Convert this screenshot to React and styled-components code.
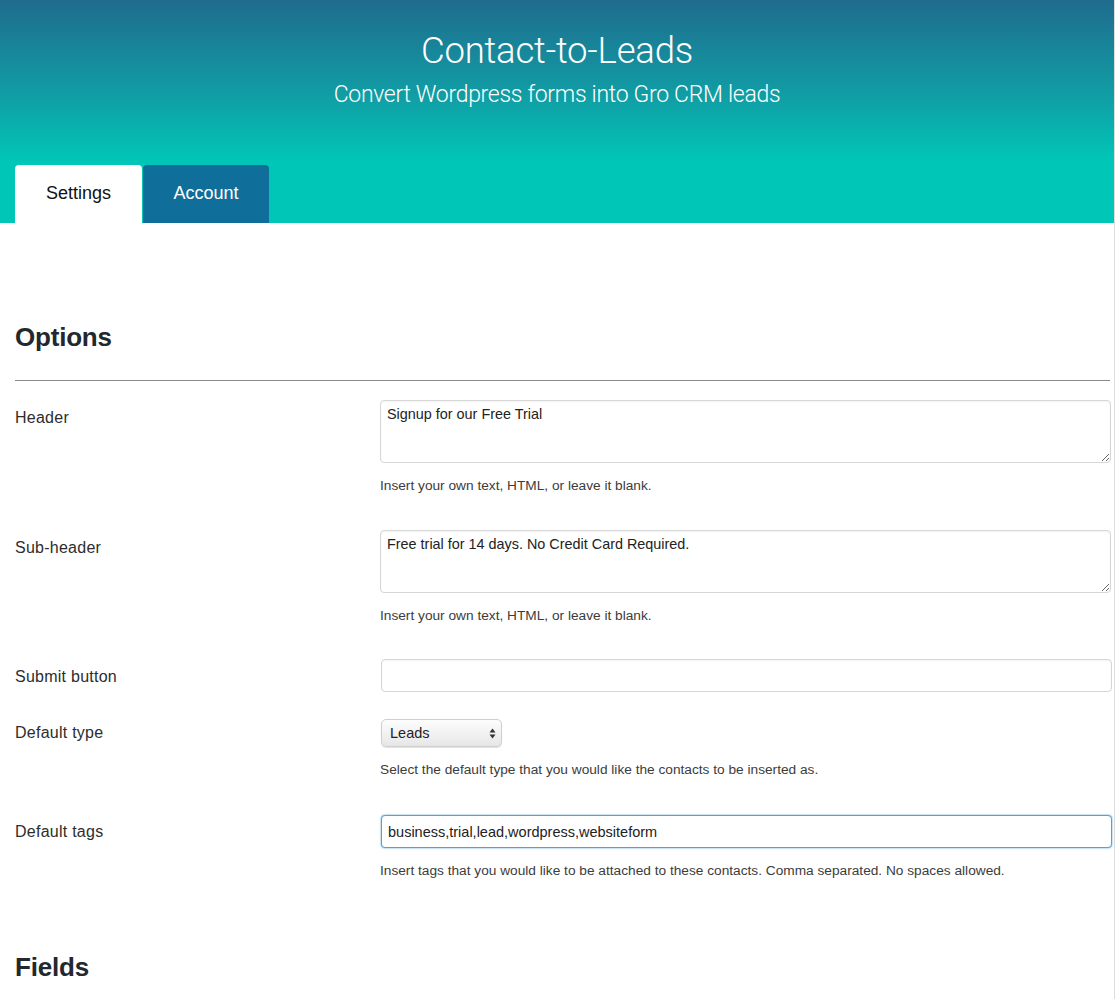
import React from "react";
import styled, { createGlobalStyle } from "styled-components";

const Global = createGlobalStyle`
  html, body { margin: 0; padding: 0; background: #fff; }
  body { font-family: "Liberation Sans", Arial, sans-serif; color: #333; }
  * { box-sizing: border-box; }
`;

const Page = styled.div`
  width: 1118px;
  min-height: 999px;
  display: flex;
`;

const Main = styled.div`
  width: 1115px;
  border-right: 1px solid #dcdcdc;
  min-height: 999px;
`;

const Hero = styled.header`
  height: 223px;
  background: linear-gradient(180deg, #1f6c8e 0%, #10a0a6 45%, #00c6b7 72%, #00c6b7 100%);
  display: flex;
  flex-direction: column;
  align-items: center;
  padding-top: 30px;
`;

const Title = styled.h1`
  margin: 0;
  font-family: Roboto, "Liberation Sans", sans-serif;
  font-weight: 300;
  font-size: 36.5px;
  line-height: 42px;
  color: #fff;
  letter-spacing: -0.2px;
`;

const Subtitle = styled.p`
  margin: 9px 0 0;
  font-family: Roboto, "Liberation Sans", sans-serif;
  font-weight: 300;
  font-size: 23px;
  line-height: 28px;
  color: #fff;
  letter-spacing: -0.3px;
`;

const Tabs = styled.nav`
  margin-top: auto;
  align-self: stretch;
  display: flex;
  gap: 1px;
  padding-left: 15px;
`;

const Tab = styled.div`
  width: ${p => (p.$active ? "127px" : "126px")};
  height: 58px;
  border-radius: 4px 4px 0 0;
  background: ${p => (p.$active ? "#fff" : "#106f9a")};
  color: ${p => (p.$active ? "#111" : "#fff")};
  font-family: "Liberation Sans", Arial, sans-serif;
  font-size: 18px;
  display: flex;
  align-items: center;
  justify-content: center;
  padding-bottom: 1px;
`;

const Content = styled.main`
  padding: 98px 4px 0 15px;
`;

const SectionTitle = styled.h2`
  margin: 0;
  font-family: "Liberation Sans", Arial, sans-serif;
  font-weight: 600;
  font-size: 26px;
  line-height: 32px;
  color: #23282d;
  letter-spacing: -0.2px;
`;

const Rule = styled.hr`
  margin: 27px 0 19px;
  border: 0;
  border-top: 1px solid #8a8a8a;
  height: 0;
`;

const Row = styled.div`
  display: grid;
  grid-template-columns: 365px 1fr;
  margin-bottom: ${p => p.$mb || "26px"};
`;

const Label = styled.label`
  font-size: 16px;
  line-height: 20px;
  letter-spacing: 0.25px;
  color: #2d2d2d;
  padding-top: ${p => p.$pt || "8px"};
`;

const Field = styled.div`
  display: flex;
  flex-direction: column;
  align-items: flex-start;
`;

const TextArea = styled.textarea`
  width: 731px;
  height: 63px;
  border: 1px solid #d6d6d6;
  border-radius: 4px;
  padding: 4px 6px;
  font-family: "Liberation Sans", Arial, sans-serif;
  font-size: 14.4px;
  line-height: 18px;
  color: #222;
  box-shadow: inset 0 1px 2px rgba(0,0,0,0.05);
  resize: vertical;
  display: block;
  margin: 0;
`;

const Input = styled.input`
  width: 731px;
  height: 33px;
  margin: 0 0 0 ${p => (p.$shift ? "1px" : "0")};
  border: 1px solid ${p => (p.$focus ? "#5b9dd9" : "#d6d6d6")};
  border-radius: 4px;
  padding: 0 6px;
  font-family: "Liberation Sans", Arial, sans-serif;
  font-size: 14.5px;
  color: #222;
  box-shadow: ${p => (p.$focus ? "0 0 2px rgba(30,140,190,0.8)" : "inset 0 1px 2px rgba(0,0,0,0.05)")};
  outline: none;
  display: block;
`;

const Help = styled.p`
  margin: 14px 0 9px;
  font-size: 13.7px;
  line-height: 18px;
  color: #3c3c3c;
`;

const SelectWrap = styled.div`
  position: relative;
  width: 121px;
  height: 28px;
  margin-left: 1px;
`;

const Select = styled.select`
  appearance: none;
  -webkit-appearance: none;
  width: 100%;
  height: 100%;
  margin: 0;
  border: 1px solid #cfcfcf;
  border-radius: 5px;
  padding: 0 8px;
  background: linear-gradient(180deg, #fdfdfd 0%, #f0f0f0 60%, #e6e6e6 100%);
  box-shadow: 0 1px 1px rgba(0,0,0,0.12);
  font-family: "Liberation Sans", Arial, sans-serif;
  font-size: 14.5px;
  color: #222;
  outline: none;
`;

const Arrows = styled.svg`
  position: absolute;
  right: 6px;
  top: 9px;
  pointer-events: none;
`;

const FieldsTitle = styled(SectionTitle)`
  margin-top: 62px;
`;

export default function App() {
  return (
    <Page>
      <Global />
      <Main>
        <Hero>
          <Title>Contact-to-Leads</Title>
          <Subtitle>Convert Wordpress forms into Gro CRM leads</Subtitle>
          <Tabs>
            <Tab $active>Settings</Tab>
            <Tab>Account</Tab>
          </Tabs>
        </Hero>
        <Content>
          <SectionTitle>Options</SectionTitle>
          <Rule />
          <Row>
            <Label>Header</Label>
            <Field>
              <TextArea defaultValue="Signup for our Free Trial" />
              <Help>Insert your own text, HTML, or leave it blank.</Help>
            </Field>
          </Row>
          <Row $mb="25px">
            <Label>Sub-header</Label>
            <Field>
              <TextArea defaultValue="Free trial for 14 days. No Credit Card Required." />
              <Help>Insert your own text, HTML, or leave it blank.</Help>
            </Field>
          </Row>
          <Row $mb="27px">
            <Label $pt="8px">Submit button</Label>
            <Field>
              <Input $shift defaultValue="" />
            </Field>
          </Row>
          <Row $mb="27px">
            <Label $pt="4px">Default type</Label>
            <Field>
              <SelectWrap>
                <Select defaultValue="Leads">
                  <option>Leads</option>
                  <option>Contacts</option>
                </Select>
                <Arrows width="7" height="11" viewBox="0 0 7 11">
                  <path d="M3.5 0.5 L6.5 4.5 L0.5 4.5 Z" fill="#333" />
                  <path d="M3.5 10.5 L6.5 6.5 L0.5 6.5 Z" fill="#333" />
                </Arrows>
              </SelectWrap>
              <Help>Select the default type that you would like the contacts to be inserted as.</Help>
            </Field>
          </Row>
          <Row>
            <Label $pt="7px">Default tags</Label>
            <Field>
              <Input $shift $focus defaultValue="business,trial,lead,wordpress,websiteform" />
              <Help>Insert tags that you would like to be attached to these contacts. Comma separated. No spaces allowed.</Help>
            </Field>
          </Row>
          <FieldsTitle>Fields</FieldsTitle>
        </Content>
      </Main>
    </Page>
  );
}
